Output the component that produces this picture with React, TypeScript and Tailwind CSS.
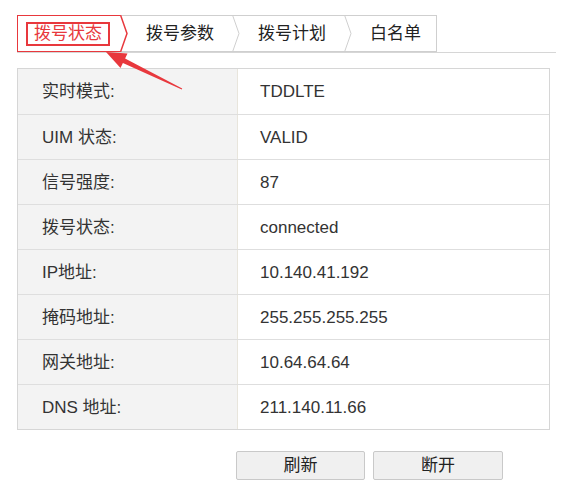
import React from 'react';

const rows: [string, string][] = [
  ['实时模式:', 'TDDLTE'],
  ['UIM 状态:', 'VALID'],
  ['信号强度:', '87'],
  ['拨号状态:', 'connected'],
  ['IP地址:', '10.140.41.192'],
  ['掩码地址:', '255.255.255.255'],
  ['网关地址:', '10.64.64.64'],
  ['DNS 地址:', '211.140.11.66'],
];

const Chevron: React.FC<{ active?: boolean }> = ({ active }) => (
  <svg width="8" height="37" viewBox="0 0 8 37" className="shrink-0 block">
    <line x1="0" y1="0.5" x2="8" y2="0.5" stroke="#cfcfcf" />
    <line x1="0" y1="36.5" x2="8" y2="36.5" stroke="#cfcfcf" />
    <polyline points="0.5,0 7,18.5 0.5,37" fill="none" stroke={active ? '#e8383d' : '#cfcfcf'} strokeWidth={active ? 1.5 : 1} />
  </svg>
);

export default function App() {
  return (
    <div
      className="relative w-[578px] h-[489px] bg-white text-[17px] text-[#333] pl-[17px] pt-[15px]"
      style={{ fontFamily: '"Liberation Sans", Arial, "Noto Sans CJK SC", sans-serif' }}
    >
      {/* tab strip */}
      <div className="flex w-[539px] border-b border-[#d6d6d6] h-[38px]">
        <div className="flex h-[37px] items-center border border-r-0 border-[#e8383d] pl-[8px] pr-[10px]">
          <span className="border-2 border-[#e8383d] px-[6px] h-[24px] flex items-center leading-none text-[#e8383d]">拨号状态</span>
        </div>
        <Chevron active />
        <div className="flex h-[37px] items-center border-y border-[#cfcfcf] px-[18px] leading-none text-[#222]">拨号参数</div>
        <Chevron />
        <div className="flex h-[37px] items-center border-y border-[#cfcfcf] px-[18px] leading-none text-[#222]">拨号计划</div>
        <Chevron />
        <div className="flex h-[37px] items-center border-y border-r border-[#cfcfcf] pl-[18px] pr-[15px] leading-none text-[#222]">白名单</div>
      </div>

      {/* status table */}
      <div className="mt-[15px] w-[533px] border border-[#d6d6d6]">
        {rows.map(([label, value], i) => (
          <div key={label} className={`flex h-[45px] ${i > 0 ? 'border-t border-[#dedede]' : ''}`}>
            <div className="w-[220px] shrink-0 bg-[#f3f3f3] border-r border-[#e8e5dc] flex items-center pl-[24px] leading-none">
              {label}
            </div>
            <div className="flex-1 bg-white flex items-center pl-[22px] leading-none">{value}</div>
          </div>
        ))}
      </div>

      {/* buttons */}
      <div className="flex gap-[8px] mt-[21px] pl-[219px]">
        <button className="w-[129px] h-[29px] bg-[#f0f0f0] border border-[#c9c9c9] rounded-[2px] leading-none text-[#222]">刷新</button>
        <button className="w-[130px] h-[29px] bg-[#f0f0f0] border border-[#c9c9c9] rounded-[2px] leading-none text-[#222]">断开</button>
      </div>

      {/* annotation arrow */}
      <svg className="absolute left-0 top-0 pointer-events-none" width="578" height="489">
        <polygon
          points="106,52 127.5,53.6 125.1,58.6 182.2,88.6 181.8,89.4 122.9,63 120.5,68"
          fill="#e8383d"
        />
      </svg>
    </div>
  );
}
